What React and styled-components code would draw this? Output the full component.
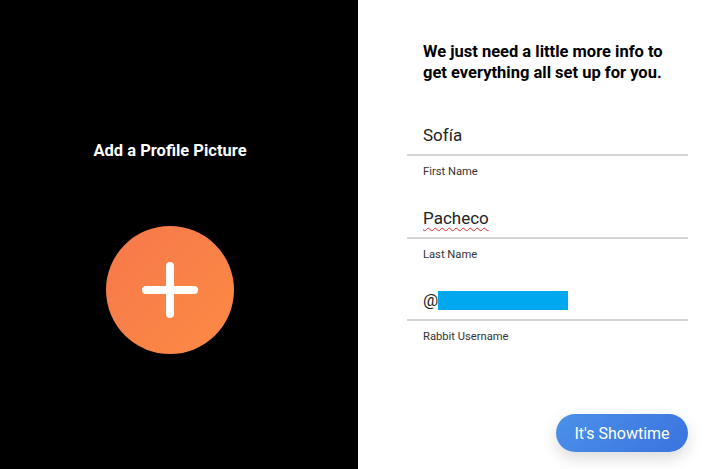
import React from 'react';
import styled, { createGlobalStyle } from 'styled-components';

const Global = createGlobalStyle`
	html, body {
		margin: 0;
		padding: 0;
		background: #fff;
	}
	body {
		font-family: Roboto, 'Noto Sans', sans-serif;
	}
`;

const Page = styled.div`
	display: grid;
	grid-template-columns: 358px 1fr;
	width: 720px;
	height: 469px;
	overflow: hidden;
`;

const LeftPane = styled.section`
	background: #000;
	display: flex;
	flex-direction: column;
	align-items: center;
	padding: 141px 18px 0 0;
`;

const PaneTitle = styled.h2`
	color: #fff;
	font-size: 16.5px;
	font-weight: 700;
	margin: 0 0 66px;
	line-height: 19px;
`;

const AddButton = styled.button`
	width: 128px;
	height: 128px;
	border-radius: 50%;
	border: none;
	background: linear-gradient(135deg, #f7784b 0%, #fc8a44 100%);
	display: flex;
	align-items: center;
	justify-content: center;
	padding: 0;
	cursor: pointer;
`;

const RightPane = styled.section`
	background: #fff;
	padding: 41px 32px 0 49px;
	display: flex;
	flex-direction: column;
	position: relative;
`;

const Heading = styled.h1`
	font-size: 16.5px;
	font-weight: 700;
	line-height: 21px;
	color: #000;
	margin: 0 0 42px;
	padding-left: 16px;
	width: 260px;
`;

const Field = styled.div`
	display: flex;
	flex-direction: column;
	margin-bottom: 28.5px;
`;

const Value = styled.div`
	font-size: 17px;
	color: #222;
	line-height: 20px;
	padding: 0 16px 9px;
	border-bottom: 2px solid #d4d4d4;
	display: flex;
	align-items: center;
`;

const Misspelled = styled.span`
	text-decoration: underline wavy #e0282c;
	text-decoration-thickness: 1px;
	text-underline-offset: 3px;
`;

const Redacted = styled.span`
	display: inline-block;
	width: 130px;
	height: 19px;
	background: #00a8f0;
`;

const Label = styled.label`
	font-size: 11.2px;
	color: #333;
	padding: 9px 16px 0;
	line-height: 14px;
`;

const Showtime = styled.button`
	position: absolute;
	right: 32px;
	bottom: 17px;
	width: 132px;
	height: 38px;
	border: none;
	border-radius: 19px;
	background: linear-gradient(135deg, #4b91e9 0%, #3a73df 100%);
	color: #fff;
	font-family: Roboto, sans-serif;
	font-size: 16px;
	box-shadow: 0 6px 16px rgba(0, 0, 0, 0.15);
	cursor: pointer;
`;

const Plus = () => (
	<svg width="56" height="56" viewBox="0 0 56 56">
		<path d="M28 4v48M4 28h48" stroke="#fff" strokeWidth="8" strokeLinecap="round" />
	</svg>
);

const App = () => {
	return (
		<>
			<Global />
			<Page>
				<LeftPane>
					<PaneTitle>Add a Profile Picture</PaneTitle>
					<AddButton aria-label="Add a profile picture">
						<Plus />
					</AddButton>
				</LeftPane>
				<RightPane>
					<Heading>We just need a little more info to get everything all set up for you.</Heading>
					<Field>
						<Value>Sofía</Value>
						<Label>First Name</Label>
					</Field>
					<Field>
						<Value>
							<Misspelled>Pacheco</Misspelled>
						</Value>
						<Label>Last Name</Label>
					</Field>
					<Field>
						<Value>
							@<Redacted />
						</Value>
						<Label>Rabbit Username</Label>
					</Field>
					<Showtime>It's Showtime</Showtime>
				</RightPane>
			</Page>
		</>
	);
};

export default App;
